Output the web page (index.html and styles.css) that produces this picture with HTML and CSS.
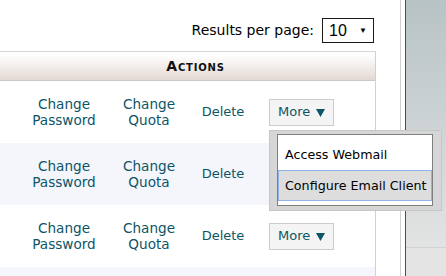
FILE: index.html
```html
<!DOCTYPE html>
<html>
<head>
  <meta charset="UTF-8">
  <title>Email Accounts</title>
  <link rel="stylesheet" href="styles.css">
</head>
<body>
  <div class="page">
    <div class="main">
      <div class="toolbar">
        <span class="toolbar-label">Results per page:</span>
        <div class="select">
          <span>10</span>
          <span class="select-arrow">&#9660;</span>
        </div>
      </div>

      <div class="accounts">
        <div class="accounts-head">Actions</div>

        <div class="account-row">
          <a class="action">Change<br>Password</a>
          <a class="action">Change<br>Quota</a>
          <a class="action delete">Delete</a>
          <div class="more-cell">
            <button class="more-btn" type="button">More
              <svg width="9" height="8" viewBox="0 0 9 8"><path d="M0 0H9L4.5 8Z" fill="#0d5566"/></svg>
            </button>
            <div class="menu-shadow">
              <div class="menu">
                <div class="menu-item">Access Webmail</div>
                <div class="menu-item hover">Configure Email Client</div>
              </div>
            </div>
          </div>
        </div>

        <!-- the More button of this row sits under the open menu -->
        <div class="account-row alt">
          <a class="action">Change<br>Password</a>
          <a class="action">Change<br>Quota</a>
          <a class="action delete">Delete</a>
        </div>

        <div class="account-row">
          <a class="action">Change<br>Password</a>
          <a class="action">Change<br>Quota</a>
          <a class="action delete">Delete</a>
          <div class="more-cell">
            <button class="more-btn" type="button">More
              <svg width="9" height="8" viewBox="0 0 9 8"><path d="M0 0H9L4.5 8Z" fill="#0d5566"/></svg>
            </button>
          </div>
        </div>

        <div class="account-row alt"></div>
      </div>
    </div>

    <div class="gutter"></div>

    <div class="sidebar">
      <div class="sidebar-top"></div>
    </div>
  </div>
</body>
</html>
```

FILE: styles.css
```css
:root {
  --link: #0d5566;
  --line: #d0d0d0;
  --row-alt: #f4f6fb;
}

body {
  margin: 0;
  font-family: 'DejaVu Sans', Verdana, sans-serif;
  font-size: 13px;
  line-height: 16px;
  color: #000;
  background: #fff;
}

.page {
  display: flex;
  height: 276px;
  overflow: hidden;
}

.main {
  width: 401px;
  flex: none;
  border-right: 1px solid var(--line);
  box-sizing: border-box;
}

.gutter {
  width: 4px;
  flex: none;
}

.sidebar {
  flex: 1;
  border-left: 1px solid #4d4d4d;
  background: #e4e4e4;
}

.sidebar-top {
  height: 247px;
  background: linear-gradient(#b8c3c5, #e2e3e3);
  border-bottom: 1px solid #d4d4d4;
}

/* results per page */
.toolbar {
  height: 51px;
  box-sizing: border-box;
  padding: 18px 26px 0 0;
  display: flex;
  justify-content: flex-end;
  align-items: flex-start;
  gap: 8px;
}

.toolbar-label {
  margin-top: 4px;
  font-size: 14px;
}

.select {
  width: 52px;
  height: 25px;
  box-sizing: border-box;
  border: 1px solid #1a1a1a;
  display: flex;
  justify-content: space-between;
  align-items: center;
  padding: 0 6px 0 6px;
  font-family: 'Liberation Sans', Arial, sans-serif;
  font-size: 16px;
}

.select-arrow {
  font-size: 8px;
}

/* accounts table */
.accounts {
  width: 375px;
  border-right: 1px solid var(--line);
  border-top: 1px solid #d6d6d6;
  height: 225px;
}

.accounts-head {
  height: 28px;
  border-bottom: 1px solid #cfc9c5;
  background: linear-gradient(#ffffff 10%, #f1ece9 55%, #e2d8d2);
  display: flex;
  align-items: center;
  justify-content: center;
  padding-left: 16px;
  font-size: 14px;
  font-weight: bold;
  font-variant: small-caps;
  letter-spacing: 0.8px;
  color: #111;
}

.account-row {
  height: 62px;
  display: grid;
  grid-template-columns: 20px 88px 82px 66px 1fr;
  align-items: center;
}

.account-row.alt {
  background: var(--row-alt);
}

.action {
  color: var(--link);
  text-align: center;
  text-decoration: none;
  font-size: 13.6px;
}

.action.delete {
  font-size: 13px;
}

.action:first-child {
  grid-column: 2;
}

.more-cell {
  position: relative;
  padding-left: 13px;
}

.more-btn {
  display: flex;
  align-items: center;
  gap: 6px;
  height: 27px;
  padding: 0 8px 0 8px;
  border: 1px solid #cccccc;
  background: #f4f4f4;
  color: var(--link);
  font: inherit;
}

.more-btn svg {
  margin-top: 1px;
}

/* dropdown */
.menu-shadow {
  position: absolute;
  left: 13px;
  top: 31px;
  z-index: 2;
  width: 173px;
  height: 81px;
  box-sizing: border-box;
  padding: 3px 8px 4px 7px;
  border: 1px solid #c6c6c6;
  background: #d6d6d6;
}

.menu {
  height: 72px;
  box-sizing: border-box;
  border: 1px solid #7f7f7f;
  background: #fff;
  padding-bottom: 3px;
  font-size: 12.7px;
}

.menu-item {
  padding: 12px 6px 7px 7px;
  white-space: nowrap;
}

.menu-item.hover {
  padding: 7px 6px 6px 6px;
  border: 1px solid #8fb3ea;
  background: #dddddd;
}
```
